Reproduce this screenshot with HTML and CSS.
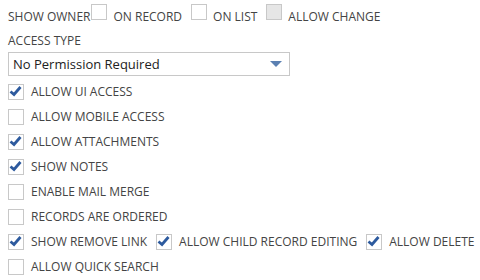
FILE: index.html
```html
<!DOCTYPE html>
<html>
<head>
<meta charset="utf-8">
<link rel="stylesheet" href="styles.css">
</head>
<body>
<div class="form">
  <div class="row top">
    <span class="lbl first">SHOW OWNER</span>
    <span class="cb tight"></span>
    <span class="lbl gapr">ON RECORD</span>
    <span class="cb"></span>
    <span class="lbl gapr">ON LIST</span>
    <span class="cb disabled"></span>
    <span class="lbl">ALLOW CHANGE</span>
  </div>
  <div class="field-label">ACCESS TYPE</div>
  <div class="select">
    <span>No Permission Required</span>
    <svg class="arrow" width="12" height="6" viewBox="0 0 12 6"><path d="M0 0H12L6 6Z" fill="#5b80b2"/></svg>
  </div>
  <div class="row"><span class="cb on"><svg viewBox="0 0 16 16"><path d="M2.5 7.5L6 10.5L12.5 3" fill="none" stroke="#2d5a9e" stroke-width="2.8"/></svg></span><span class="lbl">ALLOW UI ACCESS</span></div>
  <div class="row"><span class="cb"></span><span class="lbl">ALLOW MOBILE ACCESS</span></div>
  <div class="row"><span class="cb on"><svg viewBox="0 0 16 16"><path d="M2.5 7.5L6 10.5L12.5 3" fill="none" stroke="#2d5a9e" stroke-width="2.8"/></svg></span><span class="lbl">ALLOW ATTACHMENTS</span></div>
  <div class="row"><span class="cb on"><svg viewBox="0 0 16 16"><path d="M2.5 7.5L6 10.5L12.5 3" fill="none" stroke="#2d5a9e" stroke-width="2.8"/></svg></span><span class="lbl">SHOW NOTES</span></div>
  <div class="row"><span class="cb"></span><span class="lbl">ENABLE MAIL MERGE</span></div>
  <div class="row"><span class="cb"></span><span class="lbl">RECORDS ARE ORDERED</span></div>
  <div class="row">
    <span class="cb on"><svg viewBox="0 0 16 16"><path d="M2.5 7.5L6 10.5L12.5 3" fill="none" stroke="#2d5a9e" stroke-width="2.8"/></svg></span><span class="lbl gapr">SHOW REMOVE LINK</span>
    <span class="cb on"><svg viewBox="0 0 16 16"><path d="M2.5 7.5L6 10.5L12.5 3" fill="none" stroke="#2d5a9e" stroke-width="2.8"/></svg></span><span class="lbl gapr">ALLOW CHILD RECORD EDITING</span>
    <span class="cb on"><svg viewBox="0 0 16 16"><path d="M2.5 7.5L6 10.5L12.5 3" fill="none" stroke="#2d5a9e" stroke-width="2.8"/></svg></span><span class="lbl">ALLOW DELETE</span>
  </div>
  <div class="row"><span class="cb"></span><span class="lbl">ALLOW QUICK SEARCH</span></div>
</div>
</body>
</html>
```
FILE: styles.css
```css
html, body {
  margin: 0;
  padding: 0;
  background: #fff;
}
body {
  font-family: "Open Sans", "Liberation Sans", sans-serif;
  font-size: 12px;
  color: #444;
}
.form {
  padding: 4px 8px 0 8px;
}
.row {
  display: flex;
  align-items: center;
  height: 25px;
}
.row.top {
  height: 20px;
  align-items: flex-start;
}
.row.top .lbl {
  line-height: 16px;
  margin-top: 5px;
}
.cb {
  box-sizing: border-box;
  width: 16px;
  height: 16px;
  border: 1px solid #c8c8c8;
  background: #fff;
  flex: none;
  position: relative;
}
.cb.disabled {
  background: #e6e6e6;
}
.cb svg {
  position: absolute;
  left: -1px;
  top: -1px;
  width: 16px;
  height: 16px;
}
.lbl {
  margin-left: 7px;
  white-space: nowrap;
}
.lbl.first {
  margin-left: 0;
  margin-right: 1px;
}
.row.top .lbl {
  margin-left: 6px;
}
.row.top .lbl.first {
  margin-left: 0;
}
.gapr {
  margin-right: 9px;
}
.field-label {
  margin-top: 9px;
  line-height: 16px;
}
.select {
  margin-top: 3px;
  margin-bottom: 3px;
  width: 282px;
  height: 24px;
  box-sizing: border-box;
  border: 1px solid #c8c8c8;
  display: flex;
  align-items: center;
  justify-content: space-between;
  padding: 0 7px 0 4px;
  font-size: 13px;
  color: #222;
}
```
